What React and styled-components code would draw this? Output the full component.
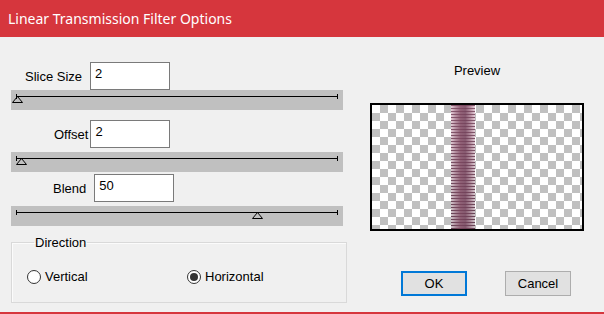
import styled, { createGlobalStyle } from "styled-components";

const GlobalStyle = createGlobalStyle`
  html, body {
    margin: 0;
    padding: 0;
    background: #f0f0f0;
  }
  * {
    box-sizing: border-box;
  }
`;

const Window = styled.div`
  width: 604px;
  height: 314px;
  display: flex;
  flex-direction: column;
  background: #f0f0f0;
  border-bottom: 2px solid #d6363d;
  font-family: "Liberation Sans", Arial, sans-serif;
  font-size: 13px;
  color: #000;
  overflow: hidden;
`;

const TitleBar = styled.div`
  height: 37px;
  flex: none;
  display: flex;
  align-items: center;
  padding-left: 8px;
  background: #d6363d;
  color: #fff;
  font-family: "Noto Sans", "Open Sans", sans-serif;
  font-size: 14px;
`;

const Body = styled.div`
  flex: 1;
  display: flex;
`;

const LeftColumn = styled.div`
  width: 346px;
  padding: 25px 0 0 11px;
  display: flex;
  flex-direction: column;
`;

const FieldRow = styled.div`
  display: flex;
  align-items: center;
  gap: ${(p) => p.$gap}px;
  padding-left: ${(p) => p.$indent}px;
  margin-top: ${(p) => p.$top}px;
  height: 28px;
`;

const Label = styled.span`
  line-height: 15px;
`;

const NumberBox = styled.input`
  width: 80px;
  height: 28px;
  border: 1px solid #7a7a7a;
  background: #fff;
  padding: 0 0 5px 4px;
  font-family: inherit;
  font-size: 13px;
  color: #000;
  outline: none;
`;

const SliderBar = styled.div`
  position: relative;
  width: 332px;
  height: 20px;
  margin-top: ${(p) => p.$top}px;
  background: #c0c0c0;
`;

const Track = styled.div`
  position: absolute;
  left: 5px;
  right: 5px;
  top: 6px;
  height: 1px;
  background: #000;

  &::before,
  &::after {
    content: "";
    position: absolute;
    top: -2px;
    width: 1px;
    height: 5px;
    background: #000;
  }
  &::before {
    left: 0;
  }
  &::after {
    right: 0;
  }
`;

const Thumb = styled.svg`
  position: absolute;
  top: 6px;
  width: 11px;
  height: 7px;
  overflow: visible;
`;

const GroupBox = styled.fieldset`
  width: 336px;
  height: 68px;
  margin: 9px 0 0 0;
  padding: 19px 0 0 15px;
  border: 1px solid #d9d9d9;
  box-shadow: inset 1px 1px 0 #fbfbfb;
  display: flex;
  align-items: flex-start;
`;

const Legend = styled.legend`
  padding: 0 1px;
  margin-left: 7px;
  line-height: 15px;
`;

const RadioOption = styled.label`
  display: flex;
  align-items: center;
  gap: 4px;
  width: ${(p) => p.$width}px;
`;

const RadioCircle = styled.span`
  width: 14px;
  height: 14px;
  border-radius: 50%;
  border: 1px solid #333;
  background: #fff;
  display: flex;
  align-items: center;
  justify-content: center;

  &::after {
    content: "";
    width: 8px;
    height: 8px;
    border-radius: 50%;
    background: ${(p) => (p.$checked ? "#333" : "transparent")};
  }
`;

const RightColumn = styled.div`
  width: 214px;
  margin-left: 24px;
  padding-top: 26px;
  display: flex;
  flex-direction: column;
`;

const PreviewTitle = styled.div`
  text-align: center;
  line-height: 15px;
`;

const PreviewBox = styled.div`
  position: relative;
  width: 214px;
  height: 128px;
  margin-top: 25px;
  border: 2px solid #000;
  background: repeating-conic-gradient(#c0c0c0 0 25%, #fff 0 50%) 0 0 / 16px 16px;
`;

const Stripe = styled.div`
  position: absolute;
  top: 0;
  bottom: 0;
  left: 79px;
  width: 24px;
  background:
    linear-gradient(to right,
      rgba(130, 75, 100, 0) 0%,
      rgba(130, 75, 100, 0.45) 18%,
      rgba(125, 70, 95, 0.8) 40%,
      rgba(115, 65, 90, 0.82) 60%,
      rgba(130, 75, 100, 0.45) 82%,
      rgba(130, 75, 100, 0) 100%),
    linear-gradient(to bottom, rgba(200, 130, 160, 0.3), rgba(60, 30, 45, 0.2)),
    repeating-linear-gradient(to bottom, #6b4a5b 0 1px, #f6f0f3 1px 3px);
`;

const ButtonRow = styled.div`
  display: flex;
  align-items: center;
  gap: 38px;
  margin-top: 40px;
  padding-left: 31px;
`;

const DialogButton = styled.button`
  width: 66px;
  height: 25px;
  padding: 0;
  background: #e1e1e1;
  border: ${(p) => (p.$primary ? "2px solid #0078d7" : "1px solid #adadad")};
  font-family: inherit;
  font-size: 13px;
  color: #000;
`;

const Slider = ({ value, min, max, top }) => {
  const fraction = (value - min) / (max - min);
  return (
    <SliderBar $top={top}>
      <Track />
      <Thumb style={{ left: 5 + fraction * 322 - 5.5 }} viewBox="0 0 11 7">
        <polygon points="5.5,0.5 10.5,6.5 0.5,6.5" fill="none" stroke="#000" strokeWidth="1" />
      </Thumb>
    </SliderBar>
  );
};

const App = () => {
  return (
    <>
      <GlobalStyle />
      <Window>
        <TitleBar>Linear Transmission Filter Options</TitleBar>
        <Body>
          <LeftColumn>
            <FieldRow $indent={14} $gap={8} $top={0}>
              <Label>Slice Size</Label>
              <NumberBox defaultValue="2" />
            </FieldRow>
            <Slider value={2} min={0} max={500} top={0} />

            <FieldRow $indent={43} $gap={2} $top={10}>
              <Label>Offset</Label>
              <NumberBox defaultValue="2" />
            </FieldRow>
            <Slider value={2} min={0} max={120} top={4} />

            <FieldRow $indent={42} $gap={8} $top={2}>
              <Label>Blend</Label>
              <NumberBox defaultValue="50" />
            </FieldRow>
            <Slider value={50} min={-100} max={100} top={4} />

            <GroupBox>
              <Legend>Direction</Legend>
              <RadioOption $width={160}>
                <RadioCircle />
                Vertical
              </RadioOption>
              <RadioOption $width={120}>
                <RadioCircle $checked />
                Horizontal
              </RadioOption>
            </GroupBox>
          </LeftColumn>

          <RightColumn>
            <PreviewTitle>Preview</PreviewTitle>
            <PreviewBox>
              <Stripe />
            </PreviewBox>
            <ButtonRow>
              <DialogButton $primary>OK</DialogButton>
              <DialogButton>Cancel</DialogButton>
            </ButtonRow>
          </RightColumn>
        </Body>
      </Window>
    </>
  );
};

export default App;
